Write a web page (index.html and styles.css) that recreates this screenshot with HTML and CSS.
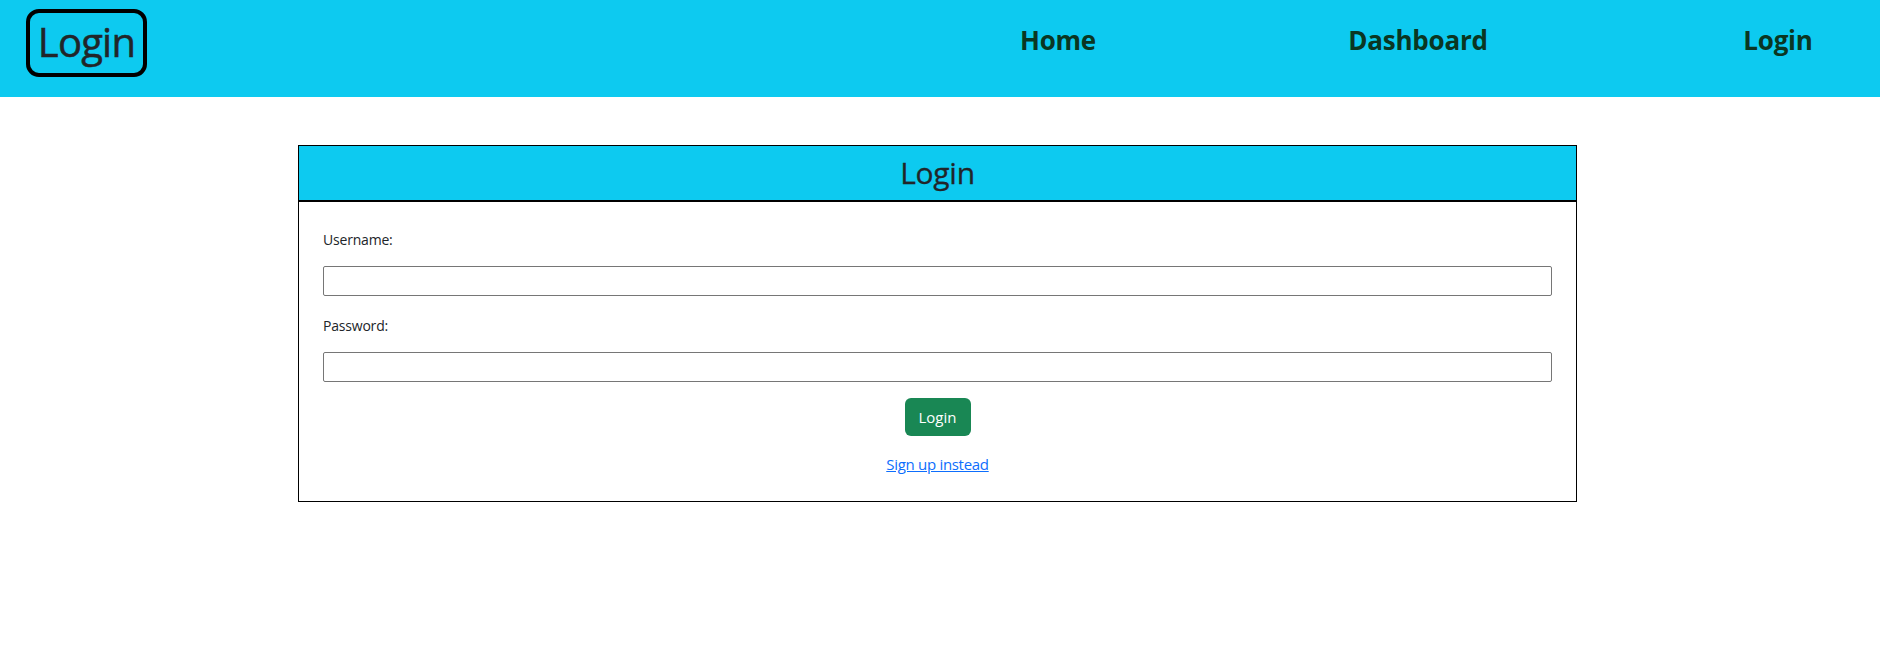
FILE: index.html
```html
<!DOCTYPE html>
<html lang="en">
<head>
<meta charset="utf-8">
<title>Login</title>
<link rel="stylesheet" href="styles.css">
</head>
<body>
<header class="topbar">
  <div class="brand">Login</div>
  <nav class="nav">
    <a class="nav-link" href="#">Home</a>
    <a class="nav-link" href="#">Dashboard</a>
    <a class="nav-link" href="#">Login</a>
  </nav>
</header>
<main class="main">
  <section class="card">
    <div class="card-header"><h2 class="card-title">Login</h2></div>
    <form class="card-body">
      <label class="field-label" for="u">Username:</label>
      <input class="field-input" id="u" type="text">
      <label class="field-label" for="p">Password:</label>
      <input class="field-input last" id="p" type="password">
      <button class="btn" type="button">Login</button>
      <p class="alt"><a href="#" class="alt-link">Sign up instead</a></p>
    </form>
  </section>
</main>
</body>
</html>
```
FILE: styles.css
```css
* { box-sizing: border-box; }
html, body { margin: 0; padding: 0; }
body {
  font-family: "Open Sans", "Noto Sans", sans-serif;
  color: #212529;
  background: #fff;
  font-size: 16px;
}
.topbar {
  height: 97px;
  background: #0dcaf0;
  display: flex;
  align-items: flex-start;
  justify-content: space-between;
  padding: 9px 0 0 26px;
}
.brand {
  width: 121px;
  height: 68px;
  border: 4px solid #000;
  border-radius: 13px;
  font-size: 40px;
  font-weight: 500;
  line-height: 58px;
  text-align: center;
  color: #212529;
  letter-spacing: -0.8px;
  -webkit-text-stroke: 0.5px #212529;
}
.nav {
  display: flex;
  gap: 160px;
  padding-top: 13px;
  padding-right: 2px;
}
.nav-link {
  width: 200px;
  text-align: center;
  font-size: 26px;
  font-weight: 700;
  line-height: 36px;
  color: #0a3622;
  text-decoration: none;
  letter-spacing: -0.2px;
}
.main { padding-top: 48px; }
.card {
  width: 1279px;
  margin: 0 0 0 calc(50% - 642px);
  border: 1px solid #000;
}
.card-header {
  background: #0dcaf0;
  border-bottom: 2px solid #000;
  height: 56px;
  display: flex;
  align-items: center;
  justify-content: center;
}
.card-title {
  margin: 0;
  font-size: 30px;
  font-weight: 500;
  line-height: 40px;
  letter-spacing: -0.3px;
  -webkit-text-stroke: 0.3px #212529;
}
.card-body {
  padding: 27px 24px 25px;
  display: block;
}
.field-label {
  display: block;
  font-size: 14px;
  line-height: 21px;
  margin-bottom: 16px;
  letter-spacing: -0.2px;
}
.field-input {
  display: block;
  width: 100%;
  height: 30px;
  border: 1px solid #767676;
  border-radius: 2px;
  margin: 0 0 19px;
  font-size: 14px;
  padding: 1px 2px;
}
.field-input.last { margin-bottom: 16px; }
.btn {
  display: block;
  margin: 0 auto;
  width: 66px;
  height: 38px;
  background: #198754;
  color: #fff;
  border: none;
  border-radius: 6px;
  font-family: inherit;
  font-size: 15px;
  padding: 0;
}
.alt {
  margin: 16px 0 0;
  text-align: center;
  line-height: 24px;
  font-size: 15px;
}
.alt-link { color: #0d6efd; letter-spacing: -0.3px; }
```
